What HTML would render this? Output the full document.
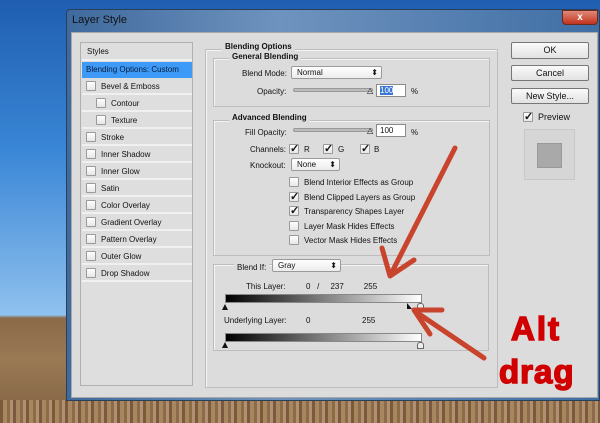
<!DOCTYPE html>
<html><head><meta charset="utf-8"><style>
*{margin:0;padding:0;box-sizing:border-box}
body{width:600px;height:423px;overflow:hidden;position:relative;font-family:"Liberation Sans",sans-serif;font-size:8px;color:#111;
background:linear-gradient(#1f5eb0 0px,#3a86d6 150px,#8fc1ee 315px,#8a6a48 318px,#9a7a55 360px,#7f6040 423px)}
.a{position:absolute}
.t{position:absolute;white-space:nowrap;font-size:8px}
.box{position:absolute;border:1px solid #bdbdbd;box-shadow:inset 1px 1px 0 #f4f4f4}
.cb{position:absolute;width:10px;height:10px;border:1px solid #9a9a9a;background:linear-gradient(#fff,#e6e6e6);border-radius:1px}
.ck::after{content:"✓";position:absolute;left:0px;top:-3px;font-size:11px;color:#111;font-weight:bold}
.sel{position:absolute;border:1px solid #9a9a9a;background:linear-gradient(#fff,#ececec);border-radius:2px;padding-left:5px;font-size:8px;line-height:11px}
.sel::after{content:"⬍";position:absolute;right:3px;top:0;font-size:8px}
.btn{position:absolute;border:1px solid #777;border-radius:2px;background:linear-gradient(#fafafa,#e2e2e2);text-align:center;font-size:9px;line-height:14px}
.row{position:absolute;left:1px;width:110px;height:16px;border-bottom:2px solid #f0f0f0}
.inp{position:absolute;border:1px solid #8a8a8a;background:#fff;font-size:8px;padding-left:3px;line-height:11px}
.slider{position:absolute;height:4px;border:1px solid #999;border-radius:2px;background:#bbb}
.red{position:absolute;white-space:nowrap;font-weight:bold;color:#d00000;font-size:33px;-webkit-text-stroke:1.5px #d00000}
</style></head><body>
<div class="a" style="left:0;top:400px;width:600px;height:23px;background:repeating-linear-gradient(90deg,#7a5a3a 0 3px,#a88660 3px 7px,#8b6b48 7px 10px,#b09070 10px 13px)"></div>
<div class="a" style="left:66px;top:9px;width:534px;height:392px;border:1px solid #2a3f5a;border-radius:4px 4px 0 0;background:linear-gradient(90deg,#3f6a9e,#6f93be 40%,#3f6ea5);"></div>
<div class="t" style="left:72px;top:14px;font-size:11px;color:#111">Layer Style</div>
<div class="a" style="left:562px;top:10px;width:36px;height:15px;border-radius:0 0 4px 4px;background:linear-gradient(#e08a78,#c2321d);border:1px solid #6b2a1f;color:#fff;text-align:center;font-size:10px;font-weight:bold;line-height:13px">x</div>
<div class="a" style="left:71px;top:32px;width:527px;height:366px;background:#dcdcdc;border:1px solid #a8a8a8"></div>
<div class="a" style="left:80px;top:42px;width:113px;height:344px;border:1px solid #b0b0b0;background:#dedede">
<div class="row" style="top:0;height:18px"><span class="t" style="left:5px;top:4px">Styles</span></div>
<div class="a" style="left:1px;top:19px;width:110px;height:16px;background:#3d9bf7"><span class="t" style="left:4px;top:3px;color:#0a1a3a">Blending Options: Custom</span></div>
<div class="row" style="top:36px"><div class="cb" style="left:4px;top:2px"></div><span class="t" style="left:19px;top:3px">Bevel &amp; Emboss</span></div>
<div class="row" style="top:53px"><div class="cb" style="left:14px;top:2px"></div><span class="t" style="left:29px;top:3px">Contour</span></div>
<div class="row" style="top:70px"><div class="cb" style="left:14px;top:2px"></div><span class="t" style="left:29px;top:3px">Texture</span></div>
<div class="row" style="top:87px"><div class="cb" style="left:4px;top:2px"></div><span class="t" style="left:19px;top:3px">Stroke</span></div>
<div class="row" style="top:104px"><div class="cb" style="left:4px;top:2px"></div><span class="t" style="left:19px;top:3px">Inner Shadow</span></div>
<div class="row" style="top:121px"><div class="cb" style="left:4px;top:2px"></div><span class="t" style="left:19px;top:3px">Inner Glow</span></div>
<div class="row" style="top:138px"><div class="cb" style="left:4px;top:2px"></div><span class="t" style="left:19px;top:3px">Satin</span></div>
<div class="row" style="top:155px"><div class="cb" style="left:4px;top:2px"></div><span class="t" style="left:19px;top:3px">Color Overlay</span></div>
<div class="row" style="top:172px"><div class="cb" style="left:4px;top:2px"></div><span class="t" style="left:19px;top:3px">Gradient Overlay</span></div>
<div class="row" style="top:189px"><div class="cb" style="left:4px;top:2px"></div><span class="t" style="left:19px;top:3px">Pattern Overlay</span></div>
<div class="row" style="top:206px"><div class="cb" style="left:4px;top:2px"></div><span class="t" style="left:19px;top:3px">Outer Glow</span></div>
<div class="row" style="top:223px"><div class="cb" style="left:4px;top:2px"></div><span class="t" style="left:19px;top:3px">Drop Shadow</span></div>
</div>
<div class="box" style="left:205px;top:49px;width:293px;height:339px"></div>
<div class="t" style="left:222px;top:42px;background:#dcdcdc;padding:0 3px;font-weight:bold">Blending Options</div>
<div class="box" style="left:213px;top:58px;width:277px;height:49px"></div>
<div class="t" style="left:229px;top:52px;background:#dcdcdc;padding:0 3px;font-weight:bold">General Blending</div>
<div class="t" style="left:242px;top:69px">Blend Mode:</div>
<div class="sel" style="left:291px;top:66px;width:91px;height:13px">Normal</div>
<div class="t" style="left:257px;top:87px">Opacity:</div>
<div class="slider" style="left:293px;top:88px;width:80px"></div>
<div class="t" style="left:367px;top:86px;font-size:8px">△</div>
<div class="inp" style="left:376px;top:84px;width:30px;height:13px"><span style="background:#3a78d8;color:#fff">100</span></div>
<div class="t" style="left:411px;top:87px">%</div>
<div class="box" style="left:213px;top:120px;width:277px;height:136px"></div>
<div class="t" style="left:229px;top:113px;background:#dcdcdc;padding:0 3px;font-weight:bold">Advanced Blending</div>
<div class="t" style="left:245px;top:128px">Fill Opacity:</div>
<div class="slider" style="left:293px;top:128px;width:80px"></div>
<div class="t" style="left:367px;top:126px">△</div>
<div class="inp" style="left:376px;top:124px;width:30px;height:13px">100</div>
<div class="t" style="left:411px;top:128px">%</div>
<div class="t" style="left:250px;top:145px">Channels:</div>
<div class="cb ck" style="left:289px;top:144px"></div><span class="t" style="left:304px;top:145px">R</span>
<div class="cb ck" style="left:323px;top:144px"></div><span class="t" style="left:338px;top:145px">G</span>
<div class="cb ck" style="left:360px;top:144px"></div><span class="t" style="left:374px;top:145px">B</span>
<div class="t" style="left:250px;top:161px">Knockout:</div>
<div class="sel" style="left:291px;top:158px;width:49px;height:13px">None</div>
<div class="cb" style="left:289px;top:177px"></div><span class="t" style="left:304px;top:178px">Blend Interior Effects as Group</span>
<div class="cb ck" style="left:289px;top:192px"></div><span class="t" style="left:304px;top:193px">Blend Clipped Layers as Group</span>
<div class="cb ck" style="left:289px;top:206px"></div><span class="t" style="left:304px;top:207px">Transparency Shapes Layer</span>
<div class="cb" style="left:289px;top:221px"></div><span class="t" style="left:304px;top:222px">Layer Mask Hides Effects</span>
<div class="cb" style="left:289px;top:235px"></div><span class="t" style="left:304px;top:236px">Vector Mask Hides Effects</span>
<div class="box" style="left:213px;top:264px;width:276px;height:87px"></div>
<div class="t" style="left:234px;top:263px;background:#dcdcdc;padding:0 3px">Blend If:</div>
<div class="sel" style="left:272px;top:259px;width:69px;height:13px">Gray</div>
<div class="t" style="left:246px;top:282px">This Layer:</div>
<div class="t" style="left:306px;top:282px">0 &nbsp;&nbsp;/ &nbsp;&nbsp;&nbsp;&nbsp;237 &nbsp;&nbsp;&nbsp;&nbsp;&nbsp;&nbsp;&nbsp;&nbsp;255</div>
<div class="a" style="left:225px;top:294px;width:197px;height:9px;background:linear-gradient(90deg,#000,#fff);border:1px solid #888"></div>
<div class="a" style="left:222px;top:304px;width:0;height:0;border-left:3px solid transparent;border-right:3px solid transparent;border-bottom:6px solid #111"></div>
<div class="a" style="left:407px;top:303px;width:0;height:0;border-left:5px solid #111;border-top:6px solid transparent"></div>
<div class="a" style="left:417px;top:303px;width:7px;height:7px;border:1px solid #666;border-radius:3px 3px 0 0;background:#eee"></div>
<div class="t" style="left:224px;top:316px">Underlying Layer:</div>
<div class="t" style="left:306px;top:316px">0</div>
<div class="t" style="left:362px;top:316px">255</div>
<div class="a" style="left:225px;top:333px;width:197px;height:9px;background:linear-gradient(90deg,#000,#fff);border:1px solid #888"></div>
<div class="a" style="left:222px;top:342px;width:0;height:0;border-left:3px solid transparent;border-right:3px solid transparent;border-bottom:6px solid #111"></div>
<div class="a" style="left:417px;top:342px;width:7px;height:7px;border:1px solid #666;border-radius:3px 3px 0 0;background:#eee"></div>
<div class="btn" style="left:511px;top:42px;width:78px;height:17px">OK</div>
<div class="btn" style="left:511px;top:65px;width:78px;height:16px">Cancel</div>
<div class="btn" style="left:511px;top:88px;width:78px;height:16px">New Style...</div>
<div class="cb ck" style="left:523px;top:112px"></div><span class="t" style="left:538px;top:112px;font-size:9px">Preview</span>
<div class="a" style="left:524px;top:129px;width:51px;height:51px;border:1px solid #c8c8c8;background:#d6d6d6"></div>
<div class="a" style="left:537px;top:143px;width:25px;height:25px;background:#a9a9a9;border:1px solid #999"></div>
<svg class="a" style="left:0;top:0" width="600" height="423">
<g stroke="#c8442c" stroke-width="5" fill="none" stroke-linecap="round" stroke-linejoin="round">
<line x1="455" y1="148" x2="392" y2="272"/>
<path d="M382 248 L390 276 L414 260"/>
<line x1="484" y1="358" x2="416" y2="312"/>
<path d="M442 310 L414 310 L430 334"/>
</g></svg>
<div class="red" style="left:511px;top:310px;letter-spacing:2px">Alt</div>
<div class="red" style="left:499px;top:353px;letter-spacing:1px">drag</div>
</body></html>
